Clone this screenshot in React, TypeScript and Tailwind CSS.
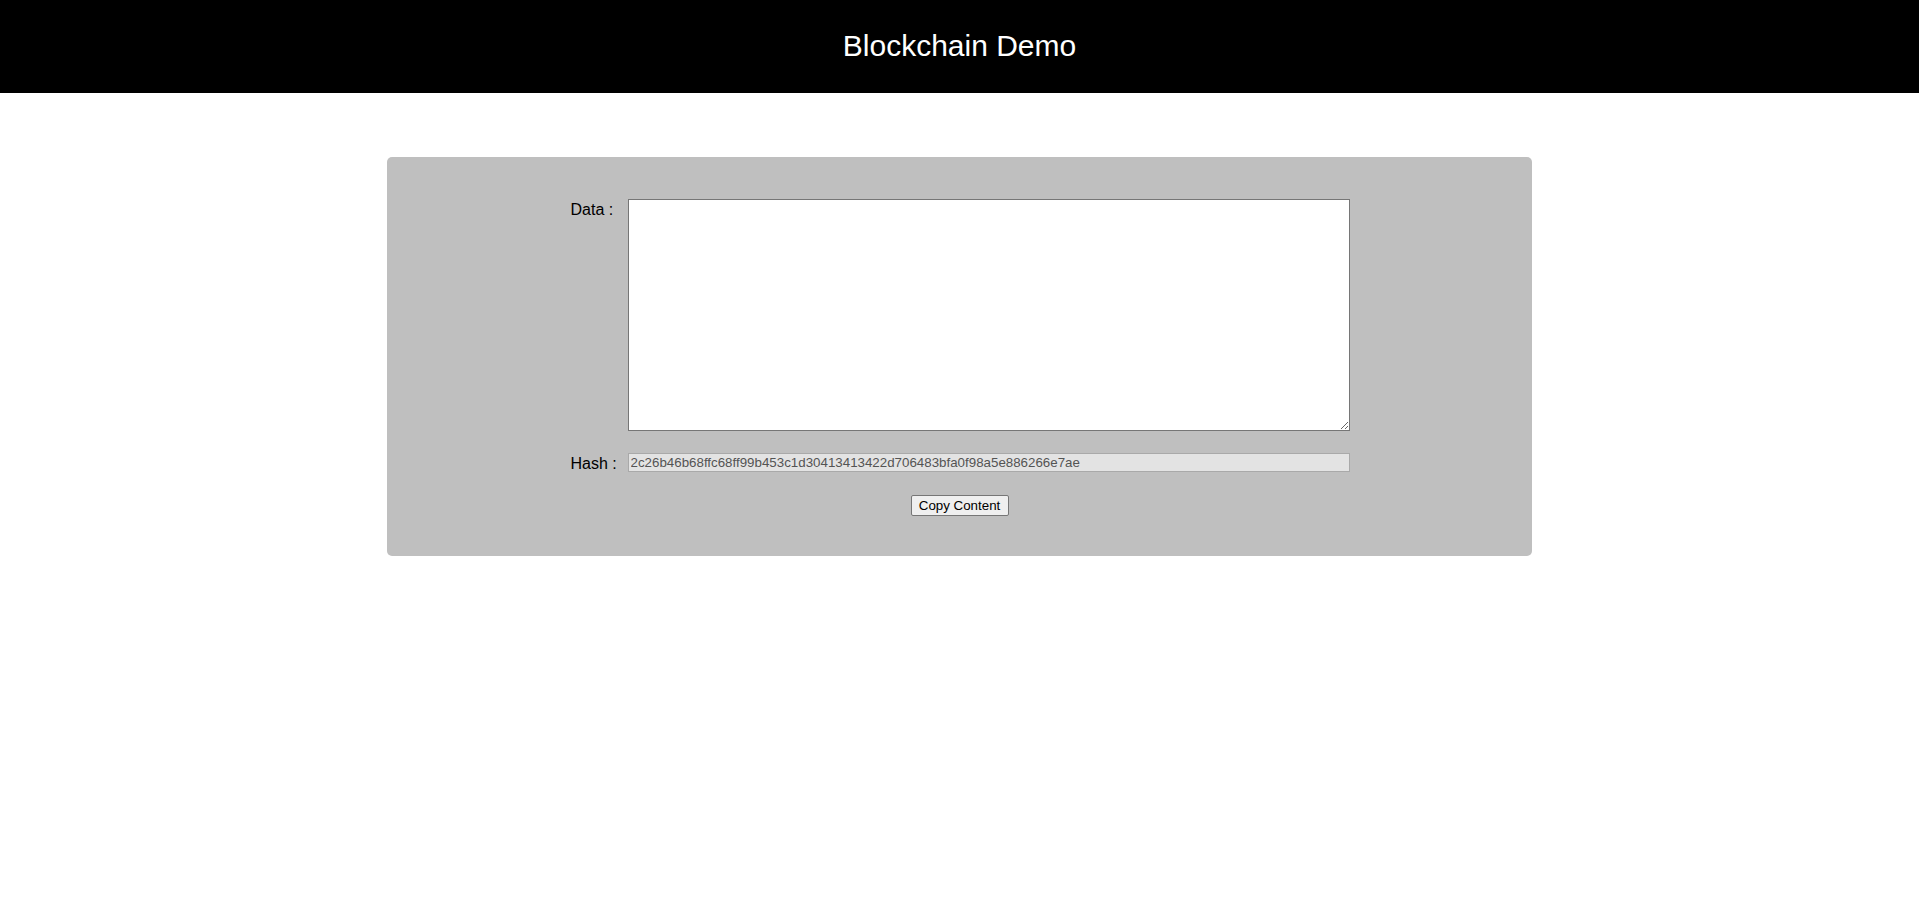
import React from "react";

export default function App() {
  const hash = "2c26b46b68ffc68ff99b453c1d30413413422d706483bfa0f98a5e886266e7ae";
  return (
    <div className="min-h-[909px] bg-white" style={{ fontFamily: '"Liberation Sans", Arial, sans-serif' }}>
      <header className="h-[93px] bg-black flex items-center justify-center">
        <h1 className="text-[30px] leading-none text-white font-normal pb-[1px]">Blockchain Demo</h1>
      </header>
      <div className="w-[1145px] mx-auto mt-[64px] bg-[#bfbfbf] rounded-[5px] pt-[42px] pb-[40px] flex flex-col items-center">
        <div className="flex items-start pl-[1px]">
          <label className="w-[57px] text-[16px] leading-[18px] text-black mt-[2px]">Data :</label>
          <textarea className="w-[722px] h-[232px] bg-white border border-[#767676] block" />
        </div>
        <div className="flex items-start h-[19px] mt-[22px] pl-[1px]">
          <label className="w-[57px] text-[16px] leading-[17px] text-black mt-[2px]">Hash :</label>
          <input
            readOnly
            value={hash}
            className="w-[722px] h-[19px] bg-[#e3e3e3] border border-[#a9a9a9] text-[13.33px] text-[#545454] px-[2px] outline-none"
            style={{ fontFamily: '"Liberation Sans", Arial, sans-serif' }}
          />
        </div>
        <button
          className="mt-[23px] w-[98px] h-[21px] bg-[#efefef] border border-[#767676] rounded-[2px] text-[13.33px] text-black leading-none"
          style={{ fontFamily: '"Liberation Sans", Arial, sans-serif' }}
        >
          Copy Content
        </button>
      </div>
    </div>
  );
}
